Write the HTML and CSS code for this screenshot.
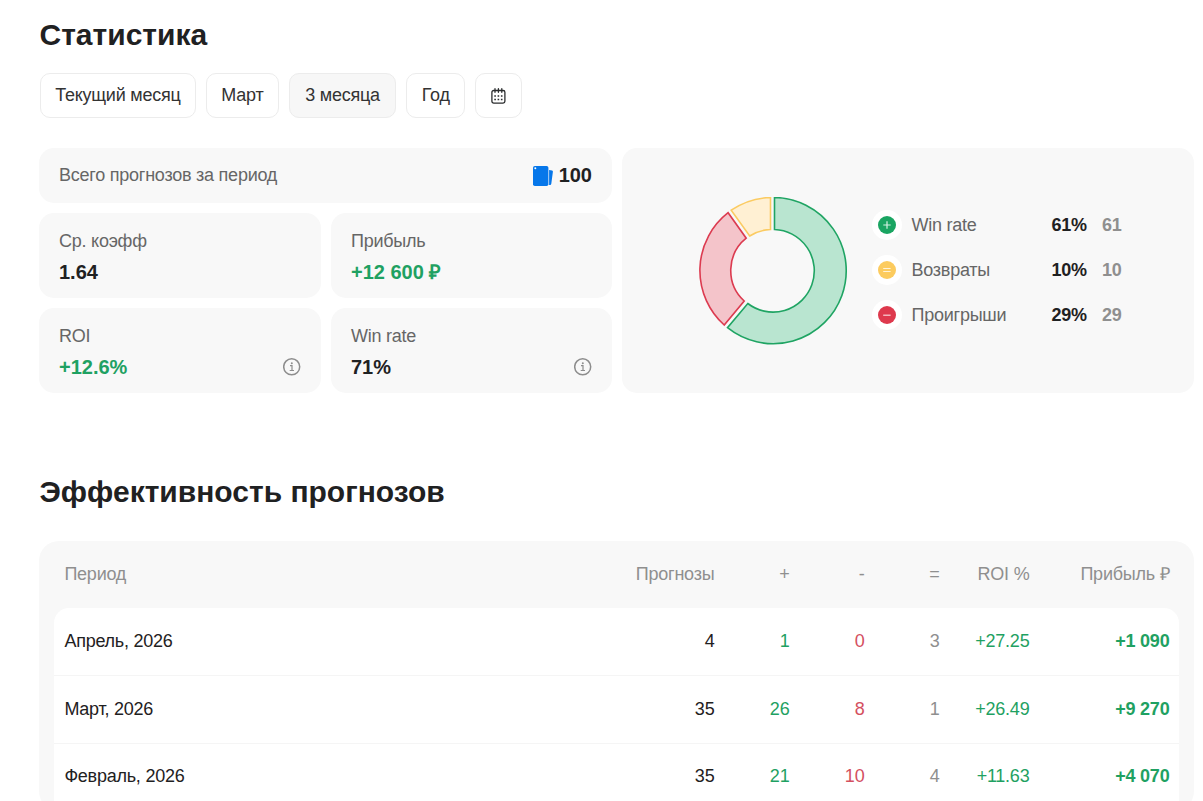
FILE: index.html
```
<!DOCTYPE html>
<html lang="ru">
<head>
  <meta charset="UTF-8" />
  <meta name="viewport" content="width=device-width, initial-scale=1.0"/>
  <title>Статистика</title>
  <link rel="stylesheet" href="styles.css">
</head>
<body>

  <main class="page">
    <h1 class="title">Статистика</h1>

    <div class="filters">
      <button class="filter">Текущий месяц</button>
      <button class="filter">Март</button>
      <button class="filter active">3 месяца</button>
      <button class="filter">Год</button>
      <button class="filter filter-icon" aria-label="Выбрать даты">
        <svg width="15" height="16" viewBox="0 0 15 16" fill="none" stroke="#2b2d2e" stroke-width="1.3">
          <rect x="0.9" y="2.5" width="13" height="12.6" rx="1.8"/>
          <path d="M4 0.7v3.6M7.4 0.7v3.6M10.8 0.7v3.6" stroke-linecap="round"/>
          <path d="M3.3 8h1.6M6.6 8h1.6M9.9 8h1.6M3.3 11.4h1.6M6.6 11.4h1.6M9.9 11.4h1.6" stroke-width="1.5"/>
        </svg>
      </button>
    </div>

    <section class="stats">
      <div class="cards">
        <div class="card card-total">
          <span class="label">Всего прогнозов за период</span>
          <span class="total">
            <svg class="total-icon" width="21" height="21" viewBox="0 0 21 21">
              <rect x="0" y="0" width="15.4" height="20" rx="1.8" fill="#0677ea"/>
              <path d="M16.1 4l3 .5q1 .2.8 1.2L18.3 17.7q-.2 1.3-1.3 1.3h-.9z" fill="#0677ea"/>
              <circle cx="2.3" cy="2.2" r="1" fill="#fff"/>
            </svg>
            <b>100</b>
          </span>
        </div>
        <div class="card">
          <span class="label">Ср. коэфф</span>
          <b class="value">1.64</b>
        </div>
        <div class="card">
          <span class="label">Прибыль</span>
          <b class="value green">+12 600 ₽</b>
        </div>
        <div class="card">
          <span class="label">ROI</span>
          <div class="value-row">
            <b class="value green">+12.6%</b>
            <svg class="info" width="18" height="18" viewBox="0 0 18 18" fill="none" stroke="#8d8d8d" stroke-width="1.5">
              <circle cx="8.7" cy="8.8" r="8"/>
              <path d="M7 7.7h2v4.6M6.7 12.5h4.3" stroke-width="1.2"/>
              <circle cx="8.8" cy="5.2" r="1" fill="#8d8d8d" stroke="none"/>
            </svg>
          </div>
        </div>
        <div class="card">
          <span class="label">Win rate</span>
          <div class="value-row">
            <b class="value">71%</b>
            <svg class="info" width="18" height="18" viewBox="0 0 18 18" fill="none" stroke="#8d8d8d" stroke-width="1.5">
              <circle cx="8.7" cy="8.8" r="8"/>
              <path d="M7 7.7h2v4.6M6.7 12.5h4.3" stroke-width="1.2"/>
              <circle cx="8.8" cy="5.2" r="1" fill="#8d8d8d" stroke="none"/>
            </svg>
          </div>
        </div>
      </div>

      <div class="chart-card">
        <svg class="donut" width="150" height="148" viewBox="0.5 1.3 150 148" stroke-width="1.6">
          <path d="M77 1.8A73.1 73.1 0 1 1 30 132L50.3 107.8A41.3 41.3 0 1 0 77 33.8Z" fill="#b9e5d0" stroke="#1fa463"/>
          <path d="M26.7 129.3A73.3 73.3 0 0 1 30.6 17L48.7 42.5A41.4 41.4 0 0 0 46.7 105.3Z" fill="#f4c4ca" stroke="#dc3b50"/>
          <path d="M33.7 14.5A73.3 73.3 0 0 1 73 1.8V33.8A41.4 41.4 0 0 0 52.2 40.3Z" fill="#fff0d3" stroke="#fbcb62"/>
        </svg>

        <div class="legend">
          <div class="legend-row">
            <svg class="mark" width="30" height="30" viewBox="0 0 30 30">
              <circle cx="15" cy="15" r="15" fill="#fff"/>
              <circle cx="15" cy="15" r="9" fill="#1aa562"/>
              <path d="M11.3 15h7.4M15 11.3v7.4" stroke="#d5f2e3" stroke-width="1.2"/>
            </svg>
            <span class="legend-name">Win rate</span>
            <b class="percent">61%</b>
            <b class="count">61</b>
          </div>
          <div class="legend-row">
            <svg class="mark" width="30" height="30" viewBox="0 0 30 30">
              <circle cx="15" cy="15" r="15" fill="#fff"/>
              <circle cx="15" cy="15" r="9" fill="#fccb5e"/>
              <path d="M11.2 13.5h7.4M11.2 16.5h7.4" stroke="#fff3d8" stroke-width="1.2"/>
            </svg>
            <span class="legend-name">Возвраты</span>
            <b class="percent">10%</b>
            <b class="count">10</b>
          </div>
          <div class="legend-row">
            <svg class="mark" width="30" height="30" viewBox="0 0 30 30">
              <circle cx="15" cy="15" r="15" fill="#fff"/>
              <circle cx="15" cy="15" r="9" fill="#de394d"/>
              <path d="M11.2 15.2h7.4" stroke="#f9d4d9" stroke-width="1.2"/>
            </svg>
            <span class="legend-name">Проигрыши</span>
            <b class="percent">29%</b>
            <b class="count">29</b>
          </div>
        </div>
      </div>
    </section>

    <h2 class="title">Эффективность прогнозов</h2>

    <section class="table">
      <div class="row head">
        <span>Период</span>
        <span>Прогнозы</span>
        <span>+</span>
        <span>-</span>
        <span>=</span>
        <span>ROI %</span>
        <span>Прибыль ₽</span>
      </div>
      <div class="table-body">
        <div class="row">
          <span>Апрель, 2026</span>
          <span>4</span>
          <span class="green">1</span>
          <span class="red">0</span>
          <span class="gray">3</span>
          <span class="green">+27.25</span>
          <b class="green">+1 090</b>
        </div>
        <div class="row">
          <span>Март, 2026</span>
          <span>35</span>
          <span class="green">26</span>
          <span class="red">8</span>
          <span class="gray">1</span>
          <span class="green">+26.49</span>
          <b class="green">+9 270</b>
        </div>
        <div class="row">
          <span>Февраль, 2026</span>
          <span>35</span>
          <span class="green">21</span>
          <span class="red">10</span>
          <span class="gray">4</span>
          <span class="green">+11.63</span>
          <b class="green">+4 070</b>
        </div>
      </div>
    </section>
  </main>

</body>
</html>
```
FILE: styles.css
```
:root {
  --text: #1f2122;
  --label: #666;
  --muted: #8f8f8f;
  --card-bg: #f8f8f8;
  --green: #1fa162;
  --red: #d4505f;
  --border: #ececec;
}

* {
  box-sizing: border-box;
}

body {
  margin: 0;
  height: 801px;
  overflow: hidden;
  background: #fff;
  color: var(--text);
  font-family: "Liberation Sans", Arial, sans-serif;
  font-size: 18px;
  line-height: 24px;
  letter-spacing: -0.24px;
}

.page {
  width: 1155px;
  margin-left: 39px;
  padding-top: 15px;
}

.title {
  margin: 0;
  padding-left: 0.5px;
  font-size: 30px;
  line-height: 40px;
  font-weight: bold;
  letter-spacing: 0;
}

.filters {
  display: flex;
  gap: 10px;
  margin: 18px 0 30px 1px;
}

.filter {
  height: 45px;
  padding: 0 14.6px;
  border: 1px solid var(--border);
  border-radius: 10px;
  background: #fff;
  color: #333;
  font-family: inherit;
  font-size: 18px;
  letter-spacing: inherit;
  cursor: pointer;
}

.filter:first-child {
  padding: 0 14.2px;
}

.filter.active {
  padding: 0 15.3px;
  background: #f7f7f7;
}

.filter-icon {
  display: flex;
  align-items: center;
  padding: 0 15px;
}

.stats {
  display: grid;
  grid-template-columns: 573px 572px;
  gap: 10px;
}

.cards {
  display: grid;
  grid-template-columns: 282px 281px;
  grid-template-rows: 55px 85px 85px;
  gap: 10px;
}

.card {
  padding: 16px 20px 0;
  border-radius: 15px;
  background: var(--card-bg);
}

.card-total {
  grid-column: 1 / 3;
  display: flex;
  align-items: center;
  justify-content: space-between;
  padding: 0 20px 2px;
}

.label {
  display: block;
  color: var(--label);
}

.total {
  display: flex;
  align-items: center;
  gap: 5px;
  font-size: 20px;
  letter-spacing: 0;
}

.total-icon {
  margin-top: 3px;
}

.value {
  display: block;
  margin-top: 7px;
  font-size: 20px;
  letter-spacing: 0;
}

.value-row {
  display: flex;
  justify-content: space-between;
}

.info {
  margin-top: 10px;
}

.green {
  color: var(--green);
}

.red {
  color: var(--red);
}

.gray {
  color: var(--muted);
}

.chart-card {
  display: flex;
  align-items: center;
  border-radius: 15px;
  background: var(--card-bg);
  padding-left: 76px;
}

.legend {
  display: flex;
  flex-direction: column;
  gap: 15px;
  margin-left: 23.5px;
}

.legend-row {
  display: grid;
  grid-template-columns: 40px 140px 50.5px 30px;
  height: 30px;
}

.mark {
  margin-top: -0.5px;
}

.legend-name {
  color: var(--label);
}

.legend-name,
.percent,
.count {
  line-height: 29px;
}

.count {
  color: var(--muted);
}

h2.title {
  margin: 79px 0 29px;
}

.table {
  padding: 0 15px;
  border-radius: 20px;
  background: var(--card-bg);
}

.row {
  display: grid;
  grid-template-columns: 1fr 120px 75px 75px 75px 90px 140px;
  align-items: center;
  height: 67.8px;
  padding: 0 9.6px 1.3px 10.4px;
  border-bottom: 1px solid #f5f5f5;
  text-align: right;
}

.row span:first-child {
  text-align: left;
}

.row.head {
  height: 67px;
  padding-bottom: 2px;
  border-bottom: 0;
  color: var(--muted);
}

.table-body {
  border-radius: 15px 15px 0 0;
  background: #fff;
}
```
